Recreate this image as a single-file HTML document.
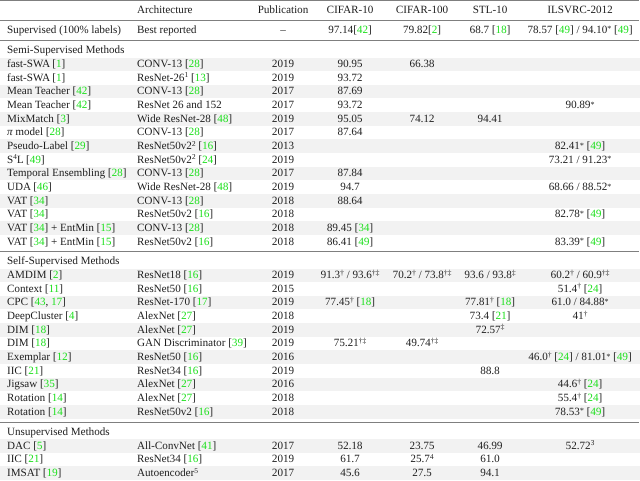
<!DOCTYPE html>
<html><head><meta charset="utf-8">
<style>
html,body{margin:0;padding:0;background:#fff}
#p{position:relative;width:640px;height:481px;overflow:hidden;background:#fff;font:11.1px/13.67px "Liberation Serif",serif;color:#1c1c1c;filter:blur(.3px);text-rendering:geometricPrecision}
.r{position:absolute;left:0;width:640px;height:13.67px}
.g{background:#f2f2f2}
.r span{position:absolute;top:.7px;white-space:nowrap}
.a{left:7px}
.b{left:137px}
.y,.c,.d,.s,.i{text-align:center}
.y{left:233px;width:100px}
.c{left:300px;width:100px}
.d{left:372px;width:100px}
.s{left:440px;width:100px}
.i{left:510px;width:140px}
i{font-style:normal;color:#1fe01f}
sup{font-size:7.5px;line-height:0;vertical-align:baseline;position:relative;top:-3.5px}
b{font-weight:normal;font-size:8px;line-height:0;position:relative;top:-1.5px}
.l{position:absolute;left:0;width:639px;height:1px;background:#7f7f7f}
</style></head><body><div id="p">
<div class="l" style="top:0"></div>
<div class="l" style="top:20px"></div>
<div class="l" style="top:40px"></div>
<div class="l" style="top:251px"></div>
<div class="l" style="top:422px"></div>

<div class="r" style="top:3.5px"><span class="b">Architecture</span><span class="y">Publication</span><span class="c">CIFAR-10</span><span class="d">CIFAR-100</span><span class="s">STL-10</span><span class="i">ILSVRC-2012</span></div>
<div class="r" style="top:23px"><span class="a">Supervised (100% labels)</span><span class="b">Best reported</span><span class="y">–</span><span class="c">97.14[<i>42</i>]</span><span class="d">79.82[<i>2</i>]</span><span class="s">68.7 [<i>18</i>]</span><span class="i">78.57 [<i>49</i>] / 94.10<b>*</b> [<i>49</i>]</span></div>
<div class="r" style="top:43.5px"><span class="a">Semi-Supervised Methods</span></div>

<div class="r g" style="top:57.5px"><span class="a">fast-SWA [<i>1</i>]</span><span class="b">CONV-13 [<i>28</i>]</span><span class="y">2019</span><span class="c">90.95</span><span class="d">66.38</span></div>
<div class="r" style="top:71.2px"><span class="a">fast-SWA [<i>1</i>]</span><span class="b">ResNet-26<sup>1</sup> [<i>13</i>]</span><span class="y">2019</span><span class="c">93.72</span></div>
<div class="r g" style="top:84.8px"><span class="a">Mean Teacher [<i>42</i>]</span><span class="b">CONV-13 [<i>28</i>]</span><span class="y">2017</span><span class="c">87.69</span></div>
<div class="r" style="top:98.5px"><span class="a">Mean Teacher [<i>42</i>]</span><span class="b">ResNet 26 and 152</span><span class="y">2017</span><span class="c">93.72</span><span class="i">90.89<b>*</b></span></div>
<div class="r g" style="top:112.1px"><span class="a">MixMatch [<i>3</i>]</span><span class="b">Wide ResNet-28 [<i>48</i>]</span><span class="y">2019</span><span class="c">95.05</span><span class="d">74.12</span><span class="s">94.41</span></div>
<div class="r" style="top:125.8px"><span class="a"><em>π</em> model [<i>28</i>]</span><span class="b">CONV-13 [<i>28</i>]</span><span class="y">2017</span><span class="c">87.64</span></div>
<div class="r g" style="top:139.4px"><span class="a">Pseudo-Label [<i>29</i>]</span><span class="b">ResNet50v2<sup>2</sup> [<i>16</i>]</span><span class="y">2013</span><span class="i">82.41<b>*</b> [<i>49</i>]</span></div>
<div class="r" style="top:153.1px"><span class="a">S<sup>4</sup>L [<i>49</i>]</span><span class="b">ResNet50v2<sup>2</sup> [<i>24</i>]</span><span class="y">2019</span><span class="i">73.21 / 91.23<b>*</b></span></div>
<div class="r g" style="top:166.7px"><span class="a">Temporal Ensembling [<i>28</i>]</span><span class="b">CONV-13 [<i>28</i>]</span><span class="y">2017</span><span class="c">87.84</span></div>
<div class="r" style="top:180.4px"><span class="a">UDA [<i>46</i>]</span><span class="b">Wide ResNet-28 [<i>48</i>]</span><span class="y">2019</span><span class="c">94.7</span><span class="i">68.66 / 88.52<b>*</b></span></div>
<div class="r g" style="top:194px"><span class="a">VAT [<i>34</i>]</span><span class="b">CONV-13 [<i>28</i>]</span><span class="y">2018</span><span class="c">88.64</span></div>
<div class="r" style="top:207.7px"><span class="a">VAT [<i>34</i>]</span><span class="b">ResNet50v2 [<i>16</i>]</span><span class="y">2018</span><span class="i">82.78<b>*</b> [<i>49</i>]</span></div>
<div class="r g" style="top:221.3px"><span class="a">VAT [<i>34</i>] + EntMin [<i>15</i>]</span><span class="b">CONV-13 [<i>28</i>]</span><span class="y">2018</span><span class="c">89.45 [<i>34</i>]</span></div>
<div class="r" style="top:235px"><span class="a">VAT [<i>34</i>] + EntMin [<i>15</i>]</span><span class="b">ResNet50v2 [<i>16</i>]</span><span class="y">2018</span><span class="c">86.41 [<i>49</i>]</span><span class="i">83.39<b>*</b> [<i>49</i>]</span></div>

<div class="r" style="top:254.5px"><span class="a">Self-Supervised Methods</span></div>
<div class="r g" style="top:268.5px"><span class="a">AMDIM [<i>2</i>]</span><span class="b">ResNet18 [<i>16</i>]</span><span class="y">2019</span><span class="c">91.3<sup>†</sup> / 93.6<sup>†‡</sup></span><span class="d">70.2<sup>†</sup> / 73.8<sup>†‡</sup></span><span class="s">93.6 / 93.8<sup>‡</sup></span><span class="i">60.2<sup>†</sup> / 60.9<sup>†‡</sup></span></div>
<div class="r" style="top:282.1px"><span class="a">Context [<i>11</i>]</span><span class="b">ResNet50 [<i>16</i>]</span><span class="y">2015</span><span class="i">51.4<sup>†</sup> [<i>24</i>]</span></div>
<div class="r g" style="top:295.8px"><span class="a">CPC [<i>43</i>, <i>17</i>]</span><span class="b">ResNet-170 [<i>17</i>]</span><span class="y">2019</span><span class="c">77.45<sup>†</sup> [<i>18</i>]</span><span class="s">77.81<sup>†</sup> [<i>18</i>]</span><span class="i">61.0 / 84.88<b>*</b></span></div>
<div class="r" style="top:309.5px"><span class="a">DeepCluster [<i>4</i>]</span><span class="b">AlexNet [<i>27</i>]</span><span class="y">2018</span><span class="s">73.4 [<i>21</i>]</span><span class="i">41<sup>†</sup></span></div>
<div class="r g" style="top:323.1px"><span class="a">DIM [<i>18</i>]</span><span class="b">AlexNet [<i>27</i>]</span><span class="y">2019</span><span class="s">72.57<sup>‡</sup></span></div>
<div class="r" style="top:336.8px"><span class="a">DIM [<i>18</i>]</span><span class="b">GAN Discriminator [<i>39</i>]</span><span class="y">2019</span><span class="c">75.21<sup>†‡</sup></span><span class="d">49.74<sup>†‡</sup></span></div>
<div class="r g" style="top:350.4px"><span class="a">Exemplar [<i>12</i>]</span><span class="b">ResNet50 [<i>16</i>]</span><span class="y">2016</span><span class="i">46.0<sup>†</sup> [<i>24</i>] / 81.01<b>*</b> [<i>49</i>]</span></div>
<div class="r" style="top:364.1px"><span class="a">IIC [<i>21</i>]</span><span class="b">ResNet34 [<i>16</i>]</span><span class="y">2019</span><span class="s">88.8</span></div>
<div class="r g" style="top:377.7px"><span class="a">Jigsaw [<i>35</i>]</span><span class="b">AlexNet [<i>27</i>]</span><span class="y">2016</span><span class="i">44.6<sup>†</sup> [<i>24</i>]</span></div>
<div class="r" style="top:391.4px"><span class="a">Rotation [<i>14</i>]</span><span class="b">AlexNet [<i>27</i>]</span><span class="y">2018</span><span class="i">55.4<sup>†</sup> [<i>24</i>]</span></div>
<div class="r g" style="top:405px"><span class="a">Rotation [<i>14</i>]</span><span class="b">ResNet50v2 [<i>16</i>]</span><span class="y">2018</span><span class="i">78.53<b>*</b> [<i>49</i>]</span></div>

<div class="r" style="top:425.5px"><span class="a">Unsupervised Methods</span></div>
<div class="r g" style="top:439px"><span class="a">DAC [<i>5</i>]</span><span class="b">All-ConvNet [<i>41</i>]</span><span class="y">2017</span><span class="c">52.18</span><span class="d">23.75</span><span class="s">46.99</span><span class="i">52.72<sup>3</sup></span></div>
<div class="r" style="top:452.7px"><span class="a">IIC [<i>21</i>]</span><span class="b">ResNet34 [<i>16</i>]</span><span class="y">2019</span><span class="c">61.7</span><span class="d">25.7<sup>4</sup></span><span class="s">61.0</span></div>
<div class="r g" style="top:466.4px"><span class="a">IMSAT [<i>19</i>]</span><span class="b">Autoencoder<sup>5</sup></span><span class="y">2017</span><span class="c">45.6</span><span class="d">27.5</span><span class="s">94.1</span></div>
</div></body></html>
